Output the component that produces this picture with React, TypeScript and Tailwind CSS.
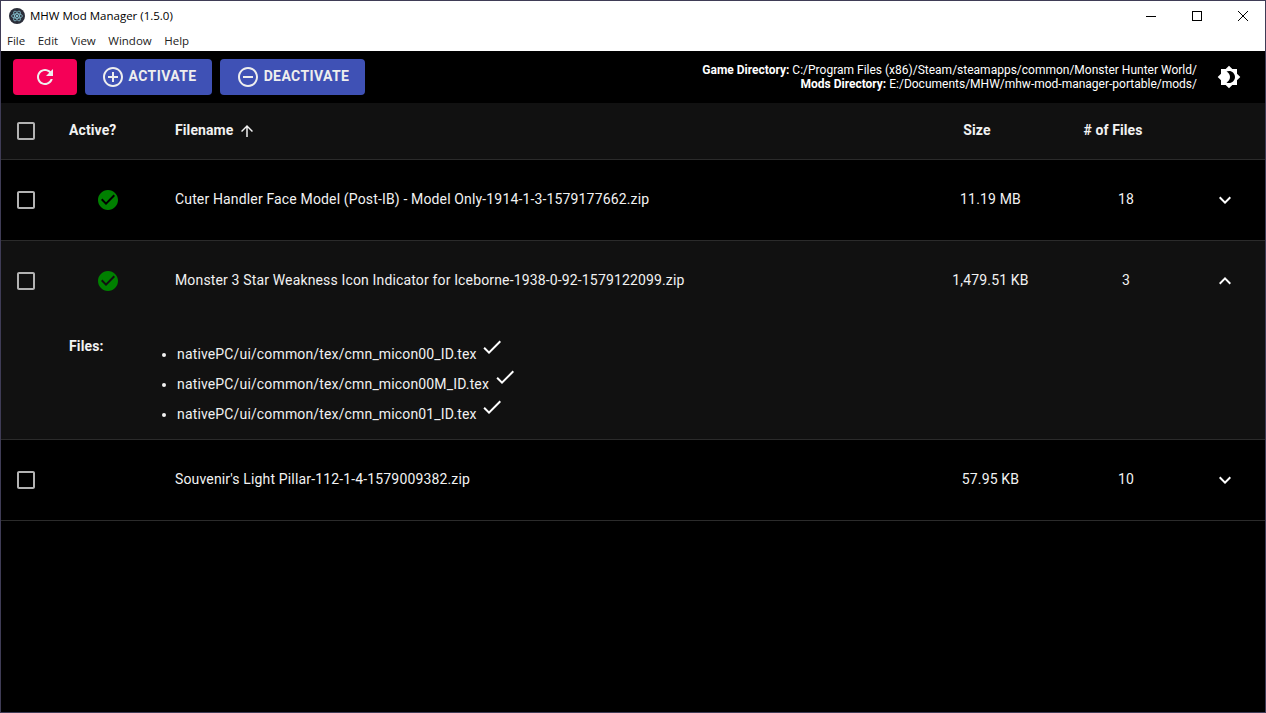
import type { ReactNode } from "react";

const paths = {
  refresh:
    "M17.65 6.35C16.2 4.9 14.21 4 12 4c-4.42 0-7.99 3.58-7.99 8s3.57 8 7.99 8c3.73 0 6.84-2.55 7.73-6h-2.08c-.82 2.33-3.04 4-5.65 4-3.31 0-6-2.69-6-6s2.69-6 6-6c1.66 0 3.14.69 4.22 1.78L13 11h7V4l-2.35 2.35z",
  add: "M13 7h-2v4H7v2h4v4h2v-4h4v-2h-4V7zm-1-5C6.48 2 2 6.48 2 12s4.48 10 10 10 10-4.48 10-10S17.52 2 12 2zm0 18c-4.41 0-8-3.59-8-8s3.59-8 8-8 8 3.59 8 8-3.59 8-8 8z",
  remove:
    "M7 11v2h10v-2H7zm5-9C6.48 2 2 6.48 2 12s4.48 10 10 10 10-4.48 10-10S17.52 2 12 2zm0 18c-4.41 0-8-3.59-8-8s3.59-8 8-8 8 3.59 8 8-3.59 8-8 8z",
  brightness:
    "M20 8.69V4h-4.69L12 .69 8.69 4H4v4.69L.69 12 4 15.31V20h4.69L12 23.31 15.31 20H20v-4.69L23.31 12 20 8.69zM12 18c-.89 0-1.74-.2-2.5-.55C11.56 16.5 13 14.42 13 12s-1.44-4.5-3.5-5.45C10.26 6.2 11.11 6 12 6c3.31 0 6 2.69 6 6s-2.69 6-6 6z",
  checkCircle:
    "M12 2C6.48 2 2 6.48 2 12s4.48 10 10 10 10-4.48 10-10S17.52 2 12 2zm-2 15l-5-5 1.41-1.41L10 14.17l7.59-7.59L19 8l-9 9z",
  checkbox:
    "M19 5v14H5V5h14m0-2H5c-1.1 0-2 .9-2 2v14c0 1.1.9 2 2 2h14c1.1 0 2-.9 2-2V5c0-1.1-.9-2-2-2z",
  arrowUp: "M4 12l1.41 1.41L11 7.83V20h2V7.83l5.58 5.59L20 12l-8-8-8 8z",
  expandMore: "M16.59 8.59L12 13.17 7.41 8.59 6 10l6 6 6-6z",
  expandLess: "M12 8l-6 6 1.41 1.41L12 10.83l4.59 4.58L18 14z",
  check: "M9 16.17L4.83 12l-1.42 1.41L9 19 21 7l-1.41-1.41z",
};

function Icon({ d, className }: { d: string; className?: string }) {
  return (
    <svg viewBox="0 0 24 24" fill="currentColor" className={className}>
      <path d={d} />
    </svg>
  );
}

function Button({ children, className }: { children: ReactNode; className: string }) {
  return (
    <button
      className={`flex h-9 items-center justify-center rounded pb-[2px] text-sm font-bold uppercase tracking-[0.4px] text-[#eeeeee] ${className}`}
    >
      {children}
    </button>
  );
}

function Checkbox() {
  return (
    <div className="flex w-[52px] justify-center pr-[2px]">
      <Icon d={paths.checkbox} className="h-6 w-6 text-[#b3b3b3]" />
    </div>
  );
}

type ModRow = {
  name: string;
  size: string;
  count: number;
  active?: boolean;
  files?: string[];
};

const mods: ModRow[] = [
  {
    name: "Cuter Handler Face Model (Post-IB) - Model Only-1914-1-3-1579177662.zip",
    size: "11.19 MB",
    count: 18,
    active: true,
  },
  {
    name: "Monster 3 Star Weakness Icon Indicator for Iceborne-1938-0-92-1579122099.zip",
    size: "1,479.51 KB",
    count: 3,
    active: true,
    files: [
      "nativePC/ui/common/tex/cmn_micon00_ID.tex",
      "nativePC/ui/common/tex/cmn_micon00M_ID.tex",
      "nativePC/ui/common/tex/cmn_micon01_ID.tex",
    ],
  },
  {
    name: "Souvenir's Light Pillar-112-1-4-1579009382.zip",
    size: "57.95 KB",
    count: 10,
  },
];

function Row({ mod }: { mod: ModRow }) {
  return (
    <div className={`border-b border-[#2b2b2b] ${mod.files ? "bg-[#111111]" : ""}`}>
      <div className="flex h-20 items-center text-sm tracking-[0.15px] text-[#f2f2f2]">
        <Checkbox />
        <div className="flex w-[110px] justify-center">
          {mod.active && <Icon d={paths.checkCircle} className="h-6 w-6 text-[#008000]" />}
        </div>
        <div className="flex-1 pl-3 pb-[2px]">{mod.name}</div>
        <div className="w-[151px] pb-[2px] text-center">{mod.size}</div>
        <div className="w-[120px] pb-[2px] text-center">{mod.count}</div>
        <div className="flex w-[79px] justify-center pr-[2px]">
          <Icon d={mod.files ? paths.expandLess : paths.expandMore} className="h-6 w-6 text-white" />
        </div>
      </div>
      {mod.files && (
        <div className="flex h-[118px] pl-[68px] text-sm tracking-[0.15px] text-[#f2f2f2]">
          <div className="w-[108px] pt-[15px] font-bold">Files:</div>
          <ul className="list-disc pt-[14px]">
            {mod.files.map((file) => (
              <li key={file} className="h-[30px] leading-5">
                {file}{" "}
                <Icon d={paths.check} className="inline h-6 w-6 align-baseline text-white" />
              </li>
            ))}
          </ul>
        </div>
      )}
    </div>
  );
}

export default function App() {
  return (
    <div className="flex h-[713px] w-[1266px] flex-col overflow-hidden border border-[#3f3c56] bg-black font-['Roboto',sans-serif]">
      {/* window chrome */}
      <div className="flex h-[29px] items-center bg-white pl-2 text-black">
        <svg viewBox="0 0 16 16" className="h-4 w-4">
          <circle cx="8" cy="8" r="8" fill="#2b2e3a" />
          <g fill="none" stroke="#9feaf9" strokeWidth="0.6">
            <ellipse cx="8" cy="8" rx="5.5" ry="2.2" />
            <ellipse cx="8" cy="8" rx="5.5" ry="2.2" transform="rotate(60 8 8)" />
            <ellipse cx="8" cy="8" rx="5.5" ry="2.2" transform="rotate(120 8 8)" />
          </g>
          <circle cx="8" cy="8" r="1" fill="#9feaf9" />
        </svg>
        <span className="ml-[5px] font-['Open_Sans',sans-serif] text-[11.5px]">MHW Mod Manager (1.5.0)</span>
        <div className="ml-auto flex">
          <div className="flex h-[29px] w-[46px] items-center justify-center">
            <svg viewBox="0 0 10 10" className="h-[10px] w-[10px]">
              <path d="M0 5.5h10" stroke="#000" strokeWidth="1" />
            </svg>
          </div>
          <div className="flex h-[29px] w-[46px] items-center justify-center">
            <svg viewBox="0 0 10 10" className="h-[10px] w-[10px]">
              <rect x="0.5" y="0.5" width="9" height="9" fill="none" stroke="#000" strokeWidth="1" />
            </svg>
          </div>
          <div className="flex h-[29px] w-[45px] items-center justify-center">
            <svg viewBox="0 0 10 10" className="h-[10px] w-[10px]">
              <path d="M0 0l10 10M10 0L0 10" stroke="#000" strokeWidth="1" />
            </svg>
          </div>
        </div>
      </div>
      <div className="flex h-[21px] items-start gap-[12.5px] bg-white pl-[6px] pt-[2px] font-['Open_Sans',sans-serif] text-[11.5px] text-[#222]">
        <span>File</span>
        <span>Edit</span>
        <span>View</span>
        <span>Window</span>
        <span>Help</span>
      </div>

      {/* toolbar */}
      <div className="flex h-[52px] items-center pl-3 pr-6 text-white">
        <Button className="w-16 bg-[#f50057]">
          <Icon d={paths.refresh} className="mt-[1px] h-6 w-6" />
        </Button>
        <Button className="ml-2 w-[127px] bg-[#3f51b5]">
          <Icon d={paths.add} className="mr-1 mt-[1px] h-6 w-6" />
          Activate
        </Button>
        <Button className="ml-2 w-[145px] bg-[#3f51b5]">
          <Icon d={paths.remove} className="mr-1 mt-[1px] h-6 w-6" />
          Deactivate
        </Button>
        <div className="ml-auto mr-5 text-right text-xs leading-[14px]">
          <div>
            <b className="font-bold">Game Directory:</b> C:/Program Files (x86)/Steam/steamapps/common/Monster Hunter World/
          </div>
          <div>
            <b className="font-bold">Mods Directory:</b> E:/Documents/MHW/mhw-mod-manager-portable/mods/
          </div>
        </div>
        <Icon d={paths.brightness} className="h-6 w-6" />
      </div>

      {/* table */}
      <div className="flex h-[57px] items-center border-b border-[#2b2b2b] bg-[#111111] text-sm font-bold tracking-[0.1px] text-[#f2f2f2]">
        <Checkbox />
        <div className="w-[110px] pb-[2px] pl-4">Active?</div>
        <div className="flex flex-1 items-center pl-3">
          <span className="pb-[2px]">Filename</span>
          <Icon d={paths.arrowUp} className="ml-[5px] h-[18px] w-[18px]" />
        </div>
        <div className="flex w-[150px] justify-center pb-[2px]">
          <span>Size</span>
          <span className="w-[26px]" />
        </div>
        <div className="flex w-[122px] justify-center pb-[2px]">
          <span># of Files</span>
          <span className="w-[26px]" />
        </div>
        <div className="w-[78px]" />
      </div>
      {mods.map((mod) => (
        <Row key={mod.name} mod={mod} />
      ))}
    </div>
  );
}
